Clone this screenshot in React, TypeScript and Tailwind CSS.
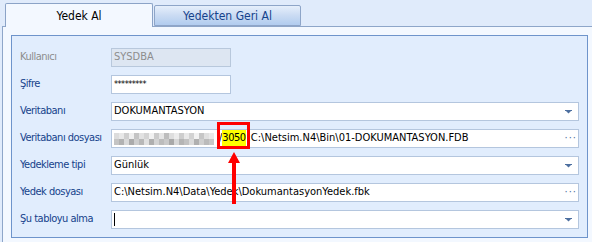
import React from "react";

// bulanık (pikselli) alan için sabit gri tonlar
const blurTop = [
  "bg-[#dcdcdc]", "bg-[#e8e8e8]", "bg-[#cfcfcf]", "bg-[#efefef]", "bg-[#c4c4c4]", "bg-[#e2e2e2]", "bg-[#d4d4d4]",
  "bg-[#f1f1f1]", "bg-[#cbcbcb]", "bg-[#e5e5e5]", "bg-[#bdbdbd]", "bg-[#dedede]", "bg-[#ececec]", "bg-[#cdcdcd]",
  "bg-[#e9e9e9]", "bg-[#d2d2d2]", "bg-[#f2f2f2]", "bg-[#c6c6c6]", "bg-[#e0e0e0]", "bg-[#eaeaea]",
];
const blurBottom = [
  "bg-[#c4c4c4]", "bg-[#b2b2b2]", "bg-[#d9d9d9]", "bg-[#ababab]", "bg-[#cdcdcd]", "bg-[#b8b8b8]", "bg-[#e0e0e0]",
  "bg-[#afafaf]", "bg-[#d3d3d3]", "bg-[#bcbcbc]", "bg-[#c9c9c9]", "bg-[#a9a9a9]", "bg-[#d7d7d7]", "bg-[#b5b5b5]",
  "bg-[#c2c2c2]", "bg-[#dadada]", "bg-[#b0b0b0]", "bg-[#cfcfcf]", "bg-[#bbbbbb]", "bg-[#c8c8c8]",
];

function ComboArrow() {
  return (
    <svg width="7" height="4" viewBox="0 0 7 4" className="shrink-0 mr-[1px]">
      <rect x="0" y="0" width="7" height="1" fill="#4d6f9f" />
      <path d="M1 1 H6 L3.5 3.6 Z" fill="#4d6f9f" />
    </svg>
  );
}

function Dots() {
  return <span className="shrink-0 -mr-[4px] text-[#4d6f9f] tracking-[1px] leading-none -mt-[3px]">···</span>;
}

function Field({
  label,
  dim,
  wide = true,
  disabled,
  children,
  right,
}: {
  label: string;
  dim?: boolean;
  wide?: boolean;
  disabled?: boolean;
  children?: React.ReactNode;
  right?: React.ReactNode;
}) {
  return (
    <div className="flex items-center h-[19px]">
      <div className={`w-[91px] shrink-0 tracking-[-0.5px] ${dim ? "text-[#8d8d8d]" : "text-[#15428b]"}`}>{label}</div>
      <div
        className={`h-[19px] flex items-center pl-[2px] pr-[5px] border ${wide ? "w-[468px]" : "w-[120px]"} ${
          disabled ? "bg-[#dde6f2] border-[#b8c8dc] text-[#8d8d8d]" : "bg-white border-[#b4c6de] text-black"
        }`}
      >
        <div className="flex-1 flex items-center overflow-hidden whitespace-nowrap">{children}</div>
        {right}
      </div>
    </div>
  );
}

export default function App() {
  return (
    <div className="w-[592px] h-[242px] bg-[#e0ebfb] overflow-hidden font-['DejaVu_Sans_Condensed','DejaVu_Sans','Liberation_Sans',sans-serif] text-[11px]">
      {/* sekmeler */}
      <div className="flex items-end h-[26px] pl-[5px]">
        <div className="relative z-10 w-[148px] h-[24px] -mb-px border border-b-0 border-[#8ba3c7] rounded-t-[2px] bg-[#f3f8ff] flex items-center justify-center text-[12px] text-black">
          Yedek Al
        </div>
        <div className="ml-px w-[147px] h-[21px] border border-[#8ea5c8] rounded-t-[2px] bg-gradient-to-b from-[#e6effb] via-[#cadbf3] to-[#b1ccef] flex items-center justify-center text-[12px] text-[#15428b]">
          Yedekten Geri Al
        </div>
      </div>

      {/* gövde */}
      <div className="ml-[2px] h-[216px] border-l border-t border-[#8ea6c9] bg-[#f3f8ff] pl-[8px] pt-[8px]">
        <div className="relative w-[577px] h-[203px] border border-[#6e94cb] bg-[#e1edfd] pl-[8px] pt-[12px] flex flex-col gap-[8px]">
          <Field label="Kullanıcı" dim wide={false} disabled>
            SYSDBA
          </Field>
          <Field label="Şifre" wide={false}>
            <span className="text-[9px] tracking-[-0.5px]">*********</span>
          </Field>
          <Field label="Veritabanı" right={<ComboArrow />}>
            DOKUMANTASYON
          </Field>
          <Field label="Veritabanı dosyası" right={<Dots />}>
            <div className="flex flex-col w-[100px] shrink-0">
              <div className="flex">
                {blurTop.map((c, i) => (
                  <div key={i} className={`w-[5px] h-[6px] ${c}`} />
                ))}
              </div>
              <div className="flex">
                {blurBottom.map((c, i) => (
                  <div key={i} className={`w-[5px] h-[6px] ${c}`} />
                ))}
              </div>
            </div>
            <span className="ml-[5px]">/</span>
            <span className="bg-[#ffff00] tracking-[-0.5px]">3050</span>
            <span className="ml-[2px]">:C:\Netsim.N4\Bin\01-DOKUMANTASYON.FDB</span>
          </Field>
          <Field label="Yedekleme tipi" right={<ComboArrow />}>
            Günlük
          </Field>
          <Field label="Yedek dosyası" right={<Dots />}>
            C:\Netsim.N4\Data\Yedek\DokumantasyonYedek.fbk
          </Field>
          <Field label="Şu tabloyu alma" right={<ComboArrow />}>
            <span className="w-px h-[13px] bg-black" />
          </Field>

          {/* kırmızı işaret */}
          <div className="absolute left-[205px] top-[86px] w-[33px] h-[27px] border-[3px] border-[#ff0000]" />
          <svg className="absolute left-[216px] top-[116px]" width="12" height="53" viewBox="0 0 12 53">
            <path d="M6 0 L12 11 H8 V52 H4 V11 H0 Z" fill="#ff0000" />
          </svg>
        </div>
      </div>
    </div>
  );
}
